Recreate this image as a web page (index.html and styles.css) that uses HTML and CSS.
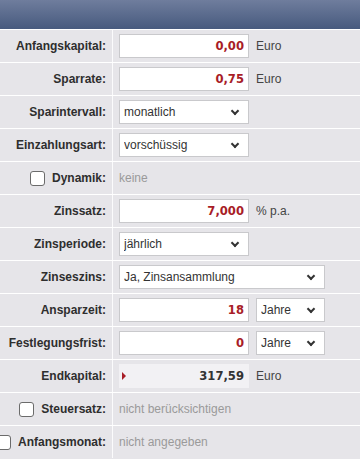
FILE: index.html
```html
<!DOCTYPE html>
<html lang="de">
<head>
    <meta charset="UTF-8">
    <meta name="viewport" content="width=device-width, initial-scale=1.0">
    <title>Sparrechner</title>
    <link rel="stylesheet" href="styles.css">
</head>
<body>
    <div class="calc">
        <div class="calc-head"></div>

        <div class="row">
            <div class="label">Anfangskapital:</div>
            <div class="value">
                <input class="num" type="text" value="0,00">
                <span class="unit">Euro</span>
            </div>
        </div>

        <div class="row">
            <div class="label">Sparrate:</div>
            <div class="value">
                <input class="num" type="text" value="0,75">
                <span class="unit">Euro</span>
            </div>
        </div>

        <div class="row">
            <div class="label">Sparintervall:</div>
            <div class="value">
                <span class="select-wrap">
                    <select><option>monatlich</option></select>
                </span>
            </div>
        </div>

        <div class="row">
            <div class="label">Einzahlungsart:</div>
            <div class="value">
                <span class="select-wrap">
                    <select><option>vorschüssig</option></select>
                </span>
            </div>
        </div>

        <div class="row">
            <div class="label"><input type="checkbox" class="check">Dynamik:</div>
            <div class="value">
                <span class="muted">keine</span>
            </div>
        </div>

        <div class="row">
            <div class="label">Zinssatz:</div>
            <div class="value">
                <input class="num" type="text" value="7,000">
                <span class="unit">% p.a.</span>
            </div>
        </div>

        <div class="row">
            <div class="label">Zinsperiode:</div>
            <div class="value">
                <span class="select-wrap">
                    <select><option>jährlich</option></select>
                </span>
            </div>
        </div>

        <div class="row">
            <div class="label">Zinseszins:</div>
            <div class="value">
                <span class="select-wrap wide">
                    <select><option>Ja, Zinsansammlung</option></select>
                </span>
            </div>
        </div>

        <div class="row">
            <div class="label">Ansparzeit:</div>
            <div class="value">
                <input class="num" type="text" value="18">
                <span class="select-wrap small">
                    <select><option>Jahre</option></select>
                </span>
            </div>
        </div>

        <div class="row">
            <div class="label">Festlegungsfrist:</div>
            <div class="value">
                <input class="num" type="text" value="0">
                <span class="select-wrap small">
                    <select><option>Jahre</option></select>
                </span>
            </div>
        </div>

        <div class="row">
            <div class="label">Endkapital:</div>
            <div class="value">
                <div class="result">317,59</div>
                <span class="unit">Euro</span>
            </div>
        </div>

        <div class="row">
            <div class="label"><input type="checkbox" class="check">Steuersatz:</div>
            <div class="value">
                <span class="muted">nicht berücksichtigen</span>
            </div>
        </div>

        <div class="row">
            <div class="label"><input type="checkbox" class="check">Anfangsmonat:</div>
            <div class="value">
                <span class="muted">nicht angegeben</span>
            </div>
        </div>
    </div>
</body>
</html>
```

FILE: styles.css
```css
body {
    margin: 0;
    background: #e6e5e9;
    font-family: "Liberation Sans", Arial, sans-serif;
    font-size: 12px;
    color: #333;
}

.calc-head {
    height: 29px;
    background: linear-gradient(#6f7d9d, #475a7e);
}

.row {
    display: flex;
    height: 32px;
    border-top: 1px solid #fff;
    background: #e6e5e9;
}

.label {
    flex: 0 0 113px;
    min-width: 0;
    display: flex;
    align-items: center;
    justify-content: flex-end;
    padding-right: 6px;
    box-sizing: border-box;
    border-right: 1px solid #fbfbfc;
    font-weight: bold;
    white-space: nowrap;
    color: #2e2e2e;
}

.value {
    flex: 1;
    display: flex;
    align-items: center;
    gap: 7px;
    padding-left: 6px;
}

.check {
    appearance: none;
    width: 15px;
    height: 15px;
    margin: 0 7px 0 0;
    flex-shrink: 0;
    background: #fff;
    border: 1px solid #6b6b6b;
    border-radius: 3px;
    box-sizing: border-box;
}

.num {
    width: 130px;
    height: 24px;
    box-sizing: border-box;
    border: 1px solid #c9c9cc;
    background: #fff;
    padding: 0 4px;
    text-align: right;
    font-family: "DejaVu Sans", Verdana, sans-serif;
    font-weight: bold;
    font-size: 11.6px;
    color: #a81d27;
    margin: 0;
}

.unit {
    color: #444;
}

.muted {
    color: #9a9a9a;
}

.select-wrap {
    position: relative;
    display: inline-block;
}

.select-wrap select {
    appearance: none;
    width: 130px;
    height: 24px;
    box-sizing: border-box;
    border: 1px solid #c9c9cc;
    background: #fff;
    padding: 0 20px 0 4px;
    font-family: "Liberation Sans", Arial, sans-serif;
    font-size: 12px;
    color: #333;
    margin: 0;
}

.select-wrap.wide select {
    width: 206px;
}

.select-wrap.small select {
    width: 69px;
}

.select-wrap::after {
    content: "";
    position: absolute;
    right: 11px;
    top: 8px;
    width: 4px;
    height: 4px;
    border-right: 2px solid #333;
    border-bottom: 2px solid #333;
    transform: rotate(45deg);
    pointer-events: none;
}

.result {
    position: relative;
    width: 130px;
    height: 24px;
    line-height: 24px;
    box-sizing: border-box;
    padding-right: 5px;
    background: #f2f1f4;
    text-align: right;
    font-family: "DejaVu Sans", Verdana, sans-serif;
    font-weight: bold;
    font-size: 11.6px;
    color: #333;
}

.result::before {
    content: "";
    position: absolute;
    left: 3px;
    top: 8px;
    border-left: 4px solid #a81d27;
    border-top: 4px solid transparent;
    border-bottom: 4px solid transparent;
}
```
